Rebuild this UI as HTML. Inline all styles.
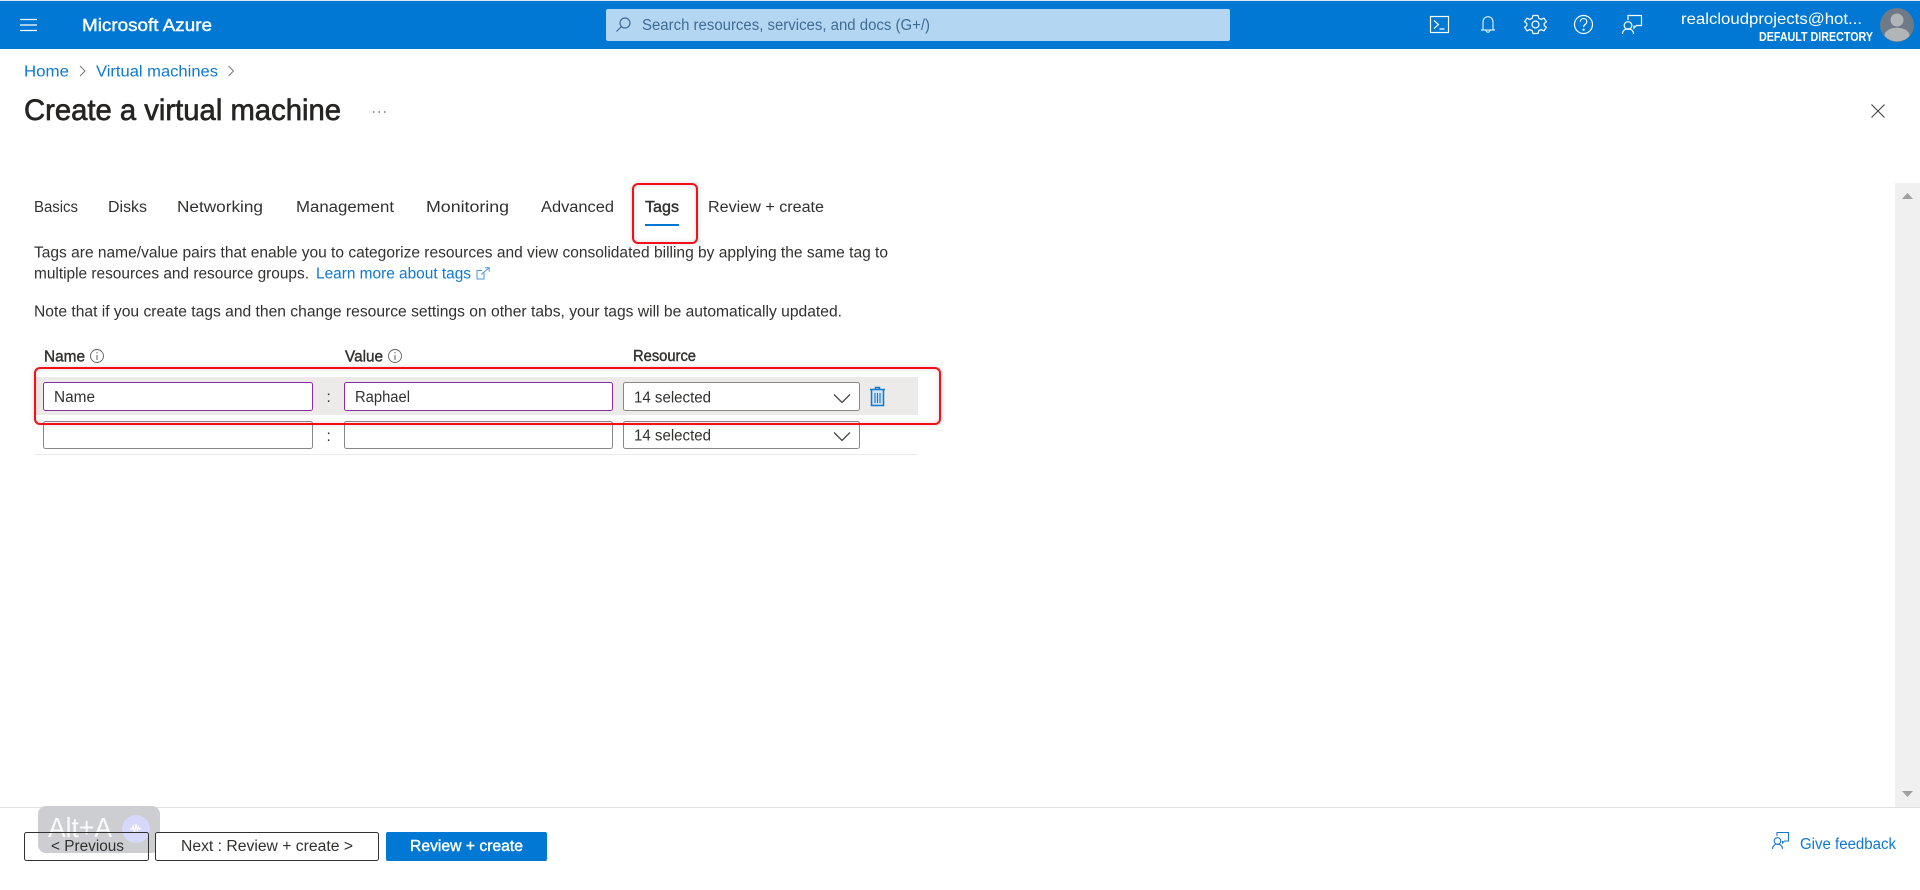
<!DOCTYPE html>
<html lang="en">
<head>
<meta charset="utf-8">
<title>Create a virtual machine - Microsoft Azure</title>
<style>
html,body{margin:0;padding:0;background:#fff;width:1920px;height:890px;overflow:hidden}
svg{display:block}
text{font-family:"Liberation Sans",sans-serif;font-size:15.5px;fill:#323130}
.semi{stroke:#323130;stroke-width:.4px}
.link{fill:#0f78d2}
.w{fill:#fff}
.ibox{fill:#fff;stroke:#8a2da5;stroke-width:1}
.gbox{fill:#fff;stroke:#8a8886;stroke-width:1}
.red{fill:none;stroke:#f50f1a;stroke-width:2}
.ic{fill:none;stroke:#fff;stroke-width:1.2}
</style>
</head>
<body>
<svg width="1920" height="890" viewBox="0 0 1920 890" xmlns="http://www.w3.org/2000/svg">
  <defs>
    <filter id="sh" x="-10%" y="-30%" width="120%" height="160%">
      <feGaussianBlur stdDeviation="2.5"/>
    </filter>
  </defs>
  <rect width="1920" height="890" fill="#fff"/>

  <!-- Top bar -->
  <rect y="0" width="1920" height="1" fill="#dfe6ee"/>
  <rect y="1" width="1920" height="48" fill="#0078d4"/>
  <path d="M20 19.5h17M20 25h17M20 30.500h17" stroke="#fff" stroke-width="1.2" fill="none"/>
  <text x="82" y="31" class="w" style="font-size:17.5px;stroke:#fff;stroke-width:.4px" textLength="130" lengthAdjust="spacingAndGlyphs">Microsoft Azure</text>

  <rect x="606" y="9" width="624" height="32" rx="2" fill="#b3d6f2"/>
  <g fill="none" stroke="#3e6d96" stroke-width="1.2">
    <circle cx="625" cy="23" r="5"/>
    <path d="M621.500 26.500L616.500 31.500"/>
  </g>
  <text x="642" y="30" style="fill:#3f6c94;font-size:15.500px" textLength="288" lengthAdjust="spacingAndGlyphs">Search resources, services, and docs (G+/)</text>

  <!-- Header icons -->
  <rect class="ic" x="1430.500" y="16.500" width="18" height="16"/>
  <path class="ic" d="M1434 20.500l4.500 4-4.500 4M1439.500 29h5"/>
  <path class="ic" stroke-opacity=".85" d="M1481 30h14M1483 30v-8c0-7 10-7 10 0v8M1486 30c0 3 4 3 4 0"/>
  <g class="ic">
    <circle cx="1535.500" cy="24.500" r="3.500"/>
    <path d="M1533 15.500h5l.8 2.800 2.500 1.100 2.600-1.300 2.500 3.600-2.200 1.700v2.200l2.200 1.700-2.500 3.600-2.600-1.300-2.500 1.100-.8 2.800h-5l-.8-2.800-2.500-1.100-2.600 1.300-2.500-3.600 2.200-1.700v-2.200l-2.200-1.700 2.500-3.600 2.600 1.300 2.500-1.100z"/>
  </g>
  <circle class="ic" cx="1583.500" cy="24.500" r="9" stroke-width="1.500"/>
  <path class="ic" stroke-width="1.700" d="M1580.300 21.800c0-4.300 6.500-4.300 6.500 0 0 2.600-3.200 2.600-3.200 5.200"/>
  <circle cx="1583.600" cy="29.700" r="1.100" fill="#fff"/>
  <g class="ic">
    <path d="M1628 20v-4.500h13.500v10h-5l-2.500 2.500v-2.500"/>
    <circle cx="1628" cy="25.500" r="3.800"/>
    <path d="M1622.500 34c0-7 11-7 11 0"/>
  </g>
  <text x="1681" y="24" class="w" style="font-size:16px" textLength="181" lengthAdjust="spacingAndGlyphs">realcloudprojects@hot...</text>
  <text x="1759" y="41" class="w" style="font-size:12.500px;font-weight:bold" textLength="114" lengthAdjust="spacingAndGlyphs">DEFAULT DIRECTORY</text>
  <circle cx="1897" cy="25" r="17" fill="#6f7a87"/>
  <circle cx="1897" cy="20" r="6.500" fill="#b2b5b8"/>
  <path d="M1884.500 36c0-11 25-11 25 0a17 17 0 0 1-25 0z" fill="#b2b5b8"/>

  <!-- Breadcrumb -->
  <text x="24" y="76.500" class="link" style="font-size:15.500px" textLength="45" lengthAdjust="spacingAndGlyphs">Home</text>
  <path d="M80 66l5 5-5 5" fill="none" stroke="#777" stroke-width="1"/>
  <text x="96" y="76.500" class="link" style="font-size:15.500px" textLength="122" lengthAdjust="spacingAndGlyphs">Virtual machines</text>
  <path d="M228.500 66l5 5-5 5" fill="none" stroke="#777" stroke-width="1"/>

  <!-- Title -->
  <text x="24" y="120" class="semi" style="font-size:29.500px;stroke-width:.65px;fill:#252423;stroke:#252423" textLength="317" lengthAdjust="spacingAndGlyphs">Create a virtual machine</text>
  <path d="M373 112h1.500M378.500 112h1.500M384 112h1.500" stroke="#555" stroke-width="1.200" fill="none"/>
  <path d="M1871.500 104.500l13 13M1884.500 104.500l-13 13" stroke="#444" stroke-width="1.100" fill="none"/>

  <!-- Scrollbar -->
  <rect x="1895" y="183" width="25" height="624" fill="#f0f0f0"/>
  <path d="M1902 199l5.500-6 5.500 6z" fill="#a0a0a0"/>
  <path d="M1902 791l5.500 6 5.500-6z" fill="#a0a0a0"/>

  <!-- Tabs -->
  <text x="34" y="212" textLength="44" lengthAdjust="spacingAndGlyphs">Basics</text>
  <text x="108" y="212" textLength="39" lengthAdjust="spacingAndGlyphs">Disks</text>
  <text x="177" y="212" textLength="86" lengthAdjust="spacingAndGlyphs">Networking</text>
  <text x="296" y="212" textLength="98" lengthAdjust="spacingAndGlyphs">Management</text>
  <text x="426" y="212" textLength="83" lengthAdjust="spacingAndGlyphs">Monitoring</text>
  <text x="541" y="212" textLength="73" lengthAdjust="spacingAndGlyphs">Advanced</text>
  <text x="645" y="212" class="semi" textLength="34" lengthAdjust="spacingAndGlyphs">Tags</text>
  <text x="708" y="212" textLength="116" lengthAdjust="spacingAndGlyphs">Review + create</text>
  <rect x="645" y="224" width="34" height="2" fill="#0078d4"/>

  <!-- Description -->
  <text x="34" y="257.500" textLength="854" lengthAdjust="spacingAndGlyphs">Tags are name/value pairs that enable you to categorize resources and view consolidated billing by applying the same tag to</text>
  <text x="34" y="278.500" textLength="275" lengthAdjust="spacingAndGlyphs">multiple resources and resource groups.</text>
  <text x="316" y="278.500" class="link" textLength="155" lengthAdjust="spacingAndGlyphs">Learn more about tags</text>
  <path d="M484 272.500v6.500h-7v-8.500h5M481 274.500l8-6.500M485 267.800h4.200v4" fill="none" stroke="#4a95dd" stroke-width="1"/>
  <text x="34" y="316.500" textLength="808" lengthAdjust="spacingAndGlyphs">Note that if you create tags and then change resource settings on other tabs, your tags will be automatically updated.</text>

  <!-- Table header -->
  <text x="44" y="361.500" class="semi" textLength="41" lengthAdjust="spacingAndGlyphs">Name</text>
  <circle cx="97" cy="356" r="6.500" fill="none" stroke="#605e5c" stroke-width=".9"/>
  <path d="M97 355v5M97 352v1.400" stroke="#605e5c" stroke-width="1" fill="none"/>
  <text x="345" y="361.500" class="semi" textLength="38" lengthAdjust="spacingAndGlyphs">Value</text>
  <circle cx="395" cy="356" r="6.500" fill="none" stroke="#605e5c" stroke-width=".9"/>
  <path d="M395 355v5M395 352v1.400" stroke="#605e5c" stroke-width="1" fill="none"/>
  <text x="633" y="361" class="semi" textLength="63" lengthAdjust="spacingAndGlyphs">Resource</text>

  <!-- Row 1 -->
  <rect x="34" y="377" width="884" height="38" fill="#edebe9"/>
  <rect class="ibox" x="43.500" y="382.500" width="269" height="28" rx="2"/>
  <text x="54" y="402" textLength="41" lengthAdjust="spacingAndGlyphs">Name</text>
  <text x="326.500" y="402">:</text>
  <rect class="ibox" x="344.500" y="382.500" width="268" height="28" rx="2"/>
  <text x="355" y="402" textLength="55" lengthAdjust="spacingAndGlyphs">Raphael</text>
  <rect class="gbox" x="623.500" y="382.500" width="236" height="28" rx="2"/>
  <text x="634" y="402.500" textLength="77" lengthAdjust="spacingAndGlyphs">14 selected</text>
  <path d="M834 394.500l8 8 8-8" fill="none" stroke="#484644" stroke-width="1.300"/>
  <rect x="871.500" y="390" width="12" height="15.500" fill="#cfe3f5"/>
  <g fill="none" stroke="#1078d0" stroke-width="1.500">
    <path d="M870 389.500h15M871.500 390v15.500h12V390M875.500 389v-1.500h4v1.500"/>
    <path d="M875 393v10M877.500 393v10M880 393v10" stroke-width="1.100"/>
  </g>

  <!-- Row 2 -->
  <rect class="gbox" x="43.500" y="421.500" width="269" height="27" rx="2"/>
  <text x="326.500" y="441">:</text>
  <rect class="gbox" x="344.500" y="421.500" width="268" height="27" rx="2"/>
  <rect class="gbox" x="623.500" y="421.500" width="236" height="27" rx="2"/>
  <text x="634" y="440.500" textLength="77" lengthAdjust="spacingAndGlyphs">14 selected</text>
  <path d="M834 432.500l8 8 8-8" fill="none" stroke="#484644" stroke-width="1.300"/>
  <rect x="34" y="454" width="884" height="1" fill="#edebe9"/>

  <!-- Red annotations -->
  <g opacity=".28" filter="url(#sh)">
    <rect class="red" style="stroke:#444" x="633" y="184" width="64" height="59" rx="5"/>
    <rect class="red" style="stroke:#444" x="35" y="368" width="905" height="56" rx="5"/>
  </g>
  <rect class="red" x="633" y="184" width="64" height="59" rx="5"/>
  <rect class="red" x="35" y="368" width="905" height="56" rx="5"/>

  <!-- Footer -->
  <rect x="0" y="807" width="1920" height="1" fill="#e1dfdd"/>
  <rect x="38" y="806" width="122" height="47" rx="8" fill="#cdced2"/>
  <text x="48" y="837" style="font-size:28px;fill:#fafafc" textLength="64" lengthAdjust="spacingAndGlyphs">Alt+A</text>
  <circle cx="136" cy="829" r="14" fill="#d6d9fb"/>
  <path d="M130 829h2l1-3 1.500 6 1.500-8 1.500 7 1-4 1 2h2" fill="none" stroke="#fff" stroke-width="1.200"/>

  <rect x="24.500" y="832.500" width="124" height="28" rx="2" fill="none" stroke="#323130"/>
  <text x="51" y="851" textLength="73" lengthAdjust="spacingAndGlyphs">&lt; Previous</text>
  <rect x="155.500" y="832.500" width="223" height="28" rx="2" fill="#fff" stroke="#323130"/>
  <text x="181" y="851" textLength="172" lengthAdjust="spacingAndGlyphs">Next : Review + create &gt;</text>
  <rect x="386" y="832" width="161" height="29" rx="2" fill="#0078d4"/>
  <text x="410" y="851" class="w" style="stroke:#fff;stroke-width:.4px" textLength="113" lengthAdjust="spacingAndGlyphs">Review + create</text>

  <g fill="none" stroke="#1b78d0" stroke-width="1.100">
    <path d="M1777 836v-3.500h11.500v8.500h-4l-2 2v-2"/>
    <circle cx="1777.500" cy="841" r="3.300"/>
    <path d="M1772.500 849c0-6.500 10-6.500 10 0"/>
  </g>
  <text x="1800" y="849" class="link" textLength="96" lengthAdjust="spacingAndGlyphs">Give feedback</text>
</svg>
</body>
</html>
